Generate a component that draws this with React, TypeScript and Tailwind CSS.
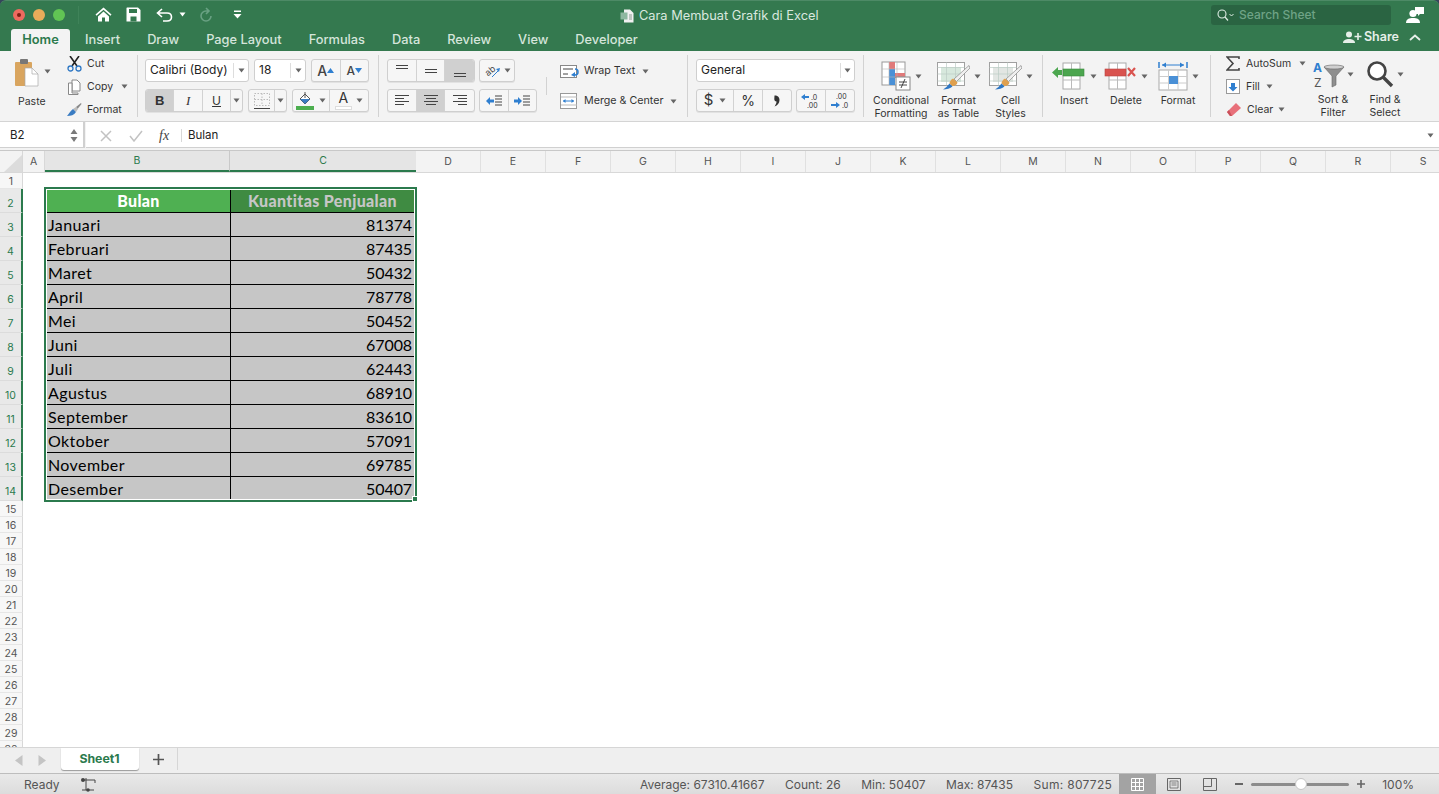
import type { ReactNode } from "react";

const ui = { fontFamily: "Inter, 'Liberation Sans', sans-serif" };
const cellFont = { fontFamily: "Lato, 'Open Sans', sans-serif" };

const TABS = ["Insert", "Draw", "Page Layout", "Formulas", "Data", "Review", "View", "Developer"];
const COLS = ["D", "E", "F", "G", "H", "I", "J", "K", "L", "M", "N", "O", "P", "Q", "R", "S"];
const DATA: [string, number][] = [
  ["Januari", 81374], ["Februari", 87435], ["Maret", 50432], ["April", 78778],
  ["Mei", 50452], ["Juni", 67008], ["Juli", 62443], ["Agustus", 68910],
  ["September", 83610], ["Oktober", 57091], ["November", 69785], ["Desember", 50407],
];

function Caret({ className = "" }: { className?: string }) {
  return (
    <svg width="7" height="5" viewBox="0 0 7 5" className={`shrink-0 ${className}`}>
      <path d="M0.5 0.5h6L3.5 4.5z" fill="#666" />
    </svg>
  );
}

function Seg({ w, active, children, last }: { w: number; active?: boolean; children: ReactNode; last?: boolean }) {
  return (
    <div
      style={{ width: w }}
      className={`h-full flex items-center justify-center ${last ? "" : "border-r border-[#d2d2d2]"} ${active ? "bg-[#d0d0d0]" : ""}`}
    >
      {children}
    </div>
  );
}

function Group({ children, className = "" }: { children: ReactNode; className?: string }) {
  return (
    <div className={`flex h-[23px] rounded-[3px] border border-[#cfcfcf] bg-[#f6f6f6] overflow-hidden shadow-[0_1px_0_#e2e2e2] ${className}`}>
      {children}
    </div>
  );
}

function Lines({ rows }: { rows: [number, number][] }) {
  return (
    <svg width="16" height="14" viewBox="0 0 16 14">
      {rows.map(([x, w], i) => (
        <rect key={i} x={x} y={1 + i * 3} width={w} height="1" fill="#444" />
      ))}
    </svg>
  );
}

function VAlign({ y }: { y: number }) {
  return (
    <svg width="16" height="16" viewBox="0 0 16 16">
      <rect x="2" y={y} width="12" height="1" fill="#444" />
      <rect x="2" y={y + 3} width="12" height="1" fill="#444" />
    </svg>
  );
}

function Indent({ flip }: { flip?: boolean }) {
  return (
    <svg width="18" height="12" viewBox="0 0 18 12">
      <path d={flip ? "M1 4.5h4V2l4 4-4 4V7.5H1z" : "M9 4.5H5V2L1 6l4 4V7.5h4z"} fill="#2f7fd0" />
      <path d="M10 1h7M10 4h7M10 7h7M10 10h7" stroke="#444" strokeWidth="1" />
    </svg>
  );
}

function BrushOverTable({ tint }: { tint: string }) {
  return (
    <svg width="33" height="28" viewBox="0 0 33 28">
      <rect x="0.5" y="0.5" width="27" height="23" fill="#fff" stroke="#a0a0a0" />
      <rect x="4" y="5" width="20" height="15" fill={tint} />
      <path d="M.5 5.5h27M.5 12h27M.5 19h27M9.5.5v23M18.5.5v23" stroke="#bccbc4" strokeWidth="0.7" />
      <path d="M32 3.5L17 17l2.5 2.5L33 6z" fill="#efefef" stroke="#888" strokeWidth="0.7" />
      <path d="M16 16.5l4.5 4c-.5 2.5-3 4-5.5 3.5l-2.5-2.5c0-2 1.5-4 3.5-5z" fill="#dfa04e" />
      <path d="M12.5 21.5l3 3c-2 2-6 3-9.5 3 2.5-1.5 4.5-3.5 6.5-6z" fill="#2f78c4" />
    </svg>
  );
}

function LabelBtn({ icon, label, w }: { icon: ReactNode; label: ReactNode; w: number }) {
  return (
    <div style={{ width: w }} className="flex flex-col items-center">
      <div className="h-[34px] flex items-center justify-center gap-[4px]">
        {icon}
        <Caret />
      </div>
      <div className="mt-[2px] text-[10.5px] leading-[12.5px] text-[#333] text-center whitespace-nowrap">{label}</div>
    </div>
  );
}

function Ribbon() {
  return (
    <div className="h-[71px] bg-[#f3f3f3] border-b border-[#d4d4d4] flex shrink-0">
      {/* clipboard */}
      <div className="w-[137px] pt-[5px] pl-[14px] flex border-r-0">
        <div className="w-[53px] flex flex-col">
          <div className="flex items-center gap-[4px] h-[33px]">
            <svg width="26" height="31" viewBox="0 0 26 31">
              <rect x="1" y="5" width="17" height="24" rx="1" fill="#d9a55f" />
              <rect x="6" y="2" width="8" height="5" rx="1" fill="#777" />
              <path d="M11 11h7l6 6v12H11z" fill="#fff" stroke="#aaa" strokeWidth="0.7" />
              <path d="M18 11v6h6" fill="none" stroke="#aaa" strokeWidth="0.7" />
            </svg>
            <Caret className="mb-[2px]" />
          </div>
          <div className="text-[10.5px] mt-[5px] ml-[4px] text-[#333]">Paste</div>
        </div>
        <div className="flex flex-col gap-[8px] text-[10.5px] text-[#333]">
          <div className="h-[15px] flex items-center gap-[5px]">
            <svg width="15" height="16" viewBox="0 0 15 16" className="shrink-0">
              <path d="M3 0l7 10M12 0L5 10" stroke="#222" strokeWidth="1.6" />
              <circle cx="3.5" cy="12.5" r="2.5" fill="none" stroke="#2f78c4" strokeWidth="1.3" />
              <circle cx="11.5" cy="12.5" r="2.5" fill="none" stroke="#2f78c4" strokeWidth="1.3" />
            </svg>
            <span>Cut</span>
          </div>
          <div className="h-[15px] flex items-center gap-[5px]">
            <svg width="15" height="16" viewBox="0 0 15 16" className="shrink-0">
              <path d="M5 1h5l3 3v8H5z" fill="#fff" stroke="#888" />
              <path d="M1.5 4H5v10h6v1.5H1.5z" fill="#fff" stroke="#888" />
            </svg>
            <span>Copy</span>
            <Caret className="ml-[3px]" />
          </div>
          <div className="h-[15px] flex items-center gap-[5px]">
            <svg width="15" height="15" viewBox="0 0 15 15" className="shrink-0">
              <path d="M14 1L9 5l1.5 2L14.5 2z" fill="#888" />
              <path d="M9 5l2 2-2 3-3-3z" fill="#bbb" />
              <path d="M6 7l3 3c-2 3-5 4-9 4 2-2 3-5 6-7z" fill="#3a7cc2" />
            </svg>
            <span>Format</span>
          </div>
        </div>
      </div>
      <div className="w-px h-[62px] mt-[4px] bg-[#d2d2d2]" />

      {/* font */}
      <div className="w-[240px] pl-[7px] pt-[8px] flex flex-col gap-[7px]">
        <div className="flex gap-[5px]">
          <div className="w-[104px] h-[23px] bg-white border border-[#cfcfcf] rounded-[3px] flex items-center pl-[4px] pb-px text-[12px] text-[#222]">
            <span className="flex-1">Calibri (Body)</span>
            <div className="w-[15px] h-[15px] border-l border-[#ddd] flex items-center justify-center"><Caret /></div>
          </div>
          <div className="w-[52px] h-[23px] bg-white border border-[#cfcfcf] rounded-[3px] flex items-center pl-[4px] pb-px text-[12px] text-[#222]">
            <span className="flex-1">18</span>
            <div className="w-[15px] h-[15px] border-l border-[#ddd] flex items-center justify-center"><Caret /></div>
          </div>
          <Group className="w-[58px]">
            <Seg w={29}>
              <span className="text-[14px] text-[#444] font-medium">A</span>
              <svg width="7" height="5" viewBox="0 0 7 5"><path d="M0 5h7L3.5 0z" fill="#2f7fd0" /></svg>
            </Seg>
            <Seg w={28} last>
              <span className="text-[12px] text-[#444] font-medium">A</span>
              <svg width="7" height="5" viewBox="0 0 7 5"><path d="M0 0h7L3.5 5z" fill="#2f7fd0" /></svg>
            </Seg>
          </Group>
        </div>
        <div className="flex gap-[5px]">
          <Group className="w-[98px]">
            <Seg w={29} active><span className="font-bold text-[13px] text-[#333]" style={{ fontFamily: "'Liberation Sans', sans-serif" }}>B</span></Seg>
            <Seg w={29}><span className="italic text-[13px] text-[#333]" style={{ fontFamily: "'Liberation Serif', serif" }}>I</span></Seg>
            <Seg w={29}><span className="underline text-[12px] text-[#333]">U</span></Seg>
            <Seg w={11} last><Caret /></Seg>
          </Group>
          <Group className="w-[39px]">
            <Seg w={27}>
              <svg width="18" height="18" viewBox="0 0 18 18">
                <rect x="1.5" y="1.5" width="15" height="12" fill="none" stroke="#bbb" strokeDasharray="1.5 1.5" />
                <path d="M9 1.5v12M1.5 7.5h15" stroke="#bbb" strokeDasharray="1.5 1.5" />
                <rect x="1" y="16" width="16" height="1" fill="#444" />
              </svg>
            </Seg>
            <Seg w={11} last><Caret /></Seg>
          </Group>
          <Group className="w-[77px]">
            <Seg w={37}>
              <div className="flex items-center gap-[5px]">
                <svg width="18" height="19" viewBox="0 0 18 19">
                  <path d="M4 8l5-5 5 5-5 5z" fill="#fff" stroke="#555" />
                  <path d="M4 8h10l-5 5z" fill="#3a7cc2" />
                  <path d="M9 1v6" stroke="#555" />
                  <rect x="0" y="15" width="18" height="4" fill="#4cae4f" />
                </svg>
                <Caret />
              </div>
            </Seg>
            <Seg w={39} last>
              <div className="flex items-center gap-[4px]">
                <div className="flex flex-col items-center w-[17px]">
                  <span className="text-[14px] leading-[14px] text-[#333]">A</span>
                  <div className="w-[17px] h-[4px] bg-white border border-[#ddd] mt-[1px]" />
                </div>
                <Caret />
              </div>
            </Seg>
          </Group>
        </div>
      </div>
      <div className="w-px h-[62px] mt-[4px] bg-[#d2d2d2]" />

      {/* alignment */}
      <div className="w-[308px] pl-[8px] pt-[8px] flex">
        <div className="flex flex-col gap-[7px]">
          <div className="flex gap-[4px]">
            <Group className="w-[88px]">
              <Seg w={29}><VAlign y={2} /></Seg>
              <Seg w={29}><VAlign y={6} /></Seg>
              <Seg w={29} last active><VAlign y={10} /></Seg>
            </Group>
            <Group className="w-[36px]">
              <Seg w={35} last>
                <div className="flex items-center gap-[3px]">
                  <svg width="17" height="16" viewBox="0 0 17 16" className="overflow-visible">
                    <text x="1" y="11" fontSize="9" fill="#444" transform="rotate(-40 6 8)" fontFamily="Inter, sans-serif">ab</text>
                    <path d="M8 14l7-7" stroke="#2f7fd0" strokeWidth="1" />
                    <path d="M16 5l-4 1 3 3z" fill="#2f7fd0" />
                  </svg>
                  <Caret />
                </div>
              </Seg>
            </Group>
          </div>
          <div className="flex gap-[4px]">
            <Group className="w-[88px]">
              <Seg w={29}><Lines rows={[[1, 14], [1, 9], [1, 14], [1, 9]]} /></Seg>
              <Seg w={29} active><Lines rows={[[1, 14], [3, 10], [1, 14], [3, 10]]} /></Seg>
              <Seg w={29} last><Lines rows={[[1, 14], [6, 9], [1, 14], [6, 9]]} /></Seg>
            </Group>
            <Group className="w-[58px]">
              <Seg w={29}><Indent /></Seg>
              <Seg w={28} last><Indent flip /></Seg>
            </Group>
          </div>
        </div>
        <div className="w-px h-[18px] mt-[18px] ml-[9px] bg-[#d2d2d2]" />
        <div className="ml-[13px] flex flex-col text-[10.7px] text-[#333] pt-[4px] gap-[14px]">
          <div className="h-[16px] flex items-center gap-[4px]">
            <svg width="20" height="15" viewBox="0 0 20 15" className="shrink-0">
              <rect x="0.5" y="1.5" width="16" height="12" fill="#fff" stroke="#888" />
              <path d="M3 5h10M3 10h5" stroke="#444" />
              <path d="M15 5c4 0 4 6 0 6" fill="none" stroke="#2f7fd0" strokeWidth="1.5" />
              <path d="M11 11l4-3v5z" fill="#2f7fd0" />
            </svg>
            <span>Wrap Text</span>
            <Caret className="ml-[3px]" />
          </div>
          <div className="h-[16px] flex items-center gap-[4px]">
            <svg width="18" height="16" viewBox="0 0 18 16" className="shrink-0 mr-[2px]">
              <rect x="0.5" y="0.5" width="16" height="15" fill="#fff" stroke="#999" />
              <path d="M1 4h16M1 12h16" stroke="#bbb" />
              <path d="M3 8h11" stroke="#2f7fd0" />
              <path d="M3 8l2.5-2v4zM14 8l-2.5-2v4z" fill="#2f7fd0" />
            </svg>
            <span>Merge &amp; Center</span>
            <Caret className="ml-[3px]" />
          </div>
        </div>
      </div>
      <div className="w-px h-[62px] mt-[4px] bg-[#d2d2d2]" />

      {/* number */}
      <div className="w-[175px] pl-[8px] pt-[8px] flex flex-col gap-[7px]">
        <div className="w-[159px] h-[23px] bg-white border border-[#cfcfcf] rounded-[3px] flex items-center pl-[4px] pb-px text-[12px] text-[#222]">
          <span className="flex-1">General</span>
          <div className="w-[14px] h-[15px] border-l border-[#ddd] flex items-center justify-center"><Caret /></div>
        </div>
        <div className="flex gap-[4px]">
          <Group className="w-[96px]">
            <Seg w={37}>
              <span className="text-[15px] text-[#333] mr-[6px]">$</span>
              <Caret />
            </Seg>
            <Seg w={29}><span className="text-[14px] text-[#333]">%</span></Seg>
            <Seg w={28} last>
              <svg width="6" height="12" viewBox="0 0 6 12">
                <path d="M0.5 0.5c3.5 0 5 2 5 4.5 0 3-2 5.5-5 6.5 1.5-2 2-3.5 2-5-1.5 0-2.2-1-2.2-2.5 0-1 .2-2.5.2-3.500z" fill="#333" />
              </svg>
            </Seg>
          </Group>
          <Group className="w-[59px]">
            <Seg w={29}>
              <svg width="20" height="16" viewBox="0 0 20 16">
                <path d="M8 3H4V1L0 4l4 3V5h4z" fill="#2f7fd0" />
                <text x="10" y="7" fontSize="7" fill="#333" fontFamily="Inter, sans-serif">.0</text>
                <text x="6" y="15" fontSize="7" fill="#333" fontFamily="Inter, sans-serif">.00</text>
              </svg>
            </Seg>
            <Seg w={29} last>
              <svg width="20" height="16" viewBox="0 0 20 16">
                <text x="6" y="6" fontSize="7" fill="#333" fontFamily="Inter, sans-serif">.00</text>
                <path d="M1 11h5V9l4 3-4 3v-2H1z" fill="#2f7fd0" />
                <text x="12" y="15" fontSize="7" fill="#333" fontFamily="Inter, sans-serif">.0</text>
              </svg>
            </Seg>
          </Group>
        </div>
      </div>
      <div className="w-px h-[62px] mt-[4px] bg-[#d2d2d2]" />

      {/* styles */}
      <div className="w-[178px] pl-[6px] pt-[8px] flex gap-[2px]">
        <LabelBtn
          w={62}
          label={<>Conditional<br />Formatting</>}
          icon={
            <svg width="30" height="30" viewBox="0 0 30 30">
              <rect x="1" y="1" width="23" height="23" fill="#fff" stroke="#999" />
              <rect x="8" y="1" width="6" height="7" fill="#e07a7a" />
              <rect x="8" y="8" width="6" height="7" fill="#4a90d6" />
              <rect x="14" y="12" width="10" height="5" fill="#e07a7a" />
              <rect x="8" y="15" width="6" height="9" fill="#4a90d6" />
              <path d="M1 8h23M1 16h23M8 1v23M16 1v23" stroke="#b5b5b5" strokeWidth="0.6" />
              <rect x="15" y="16" width="14" height="13" fill="#fff" stroke="#888" />
              <path d="M18 21h8M18 24h8M24 18l-4 9" stroke="#333" strokeWidth="0.9" />
            </svg>
          }
        />
        <LabelBtn w={49} label={<>Format<br />as Table</>} icon={<BrushOverTable tint="#d7e8dd" />} />
        <LabelBtn w={51} label={<>Cell<br />Styles</>} icon={<BrushOverTable tint="#e2e6e3" />} />
      </div>
      <div className="w-px h-[62px] mt-[4px] bg-[#d2d2d2]" />

      {/* cells */}
      <div className="w-[167px] pl-[5px] pt-[8px] flex">
        <LabelBtn
          w={52}
          label="Insert"
          icon={
            <svg width="34" height="28" viewBox="0 0 34 28">
              <rect x="11" y="1" width="17" height="26" fill="#fff" stroke="#aaa" />
              <path d="M11 18h17M19.5 1v26" stroke="#bbb" />
              <rect x="11" y="7" width="21" height="7" fill="#4ca64f" stroke="#3a8a3e" strokeWidth="0.6" />
              <path d="M0 10.5L6 5v3h4v5H6v3z" fill="#4ca64f" />
            </svg>
          }
        />
        <LabelBtn
          w={52}
          label="Delete"
          icon={
            <svg width="33" height="28" viewBox="0 0 33 28">
              <rect x="5" y="1" width="17" height="26" fill="#fff" stroke="#aaa" />
              <path d="M5 18h17M13.5 1v26" stroke="#bbb" />
              <rect x="1" y="7" width="21" height="7" fill="#d9534f" stroke="#b84340" strokeWidth="0.6" />
              <path d="M24 6l7 8M31 6l-7 8" stroke="#d9534f" strokeWidth="2.2" />
            </svg>
          }
        />
        <LabelBtn
          w={52}
          label="Format"
          icon={
            <svg width="30" height="30" viewBox="0 0 30 30">
              <path d="M1 1v6M29 1v6" stroke="#2f7fd0" strokeWidth="1.5" />
              <path d="M4 4h22" stroke="#2f7fd0" />
              <path d="M4 4l4-2.5v5zM26 4l-4-2.5v5z" fill="#2f7fd0" />
              <rect x="1" y="9" width="28" height="20" fill="#fff" stroke="#aaa" />
              <path d="M10.5 9v20M20 9v20M1 15.5h28M1 22h28" stroke="#ccc" />
              <rect x="11" y="15" width="9" height="8" fill="#4a90d6" />
            </svg>
          }
        />
      </div>
      <div className="w-px h-[62px] mt-[4px] bg-[#d2d2d2]" />

      {/* editing */}
      <div className="flex-1 pl-[15px] pt-[5px] flex text-[10.5px] text-[#333]">
        <div className="w-[81px] flex flex-col gap-[8px]">
          <div className="h-[15px] flex items-center gap-[6px]">
            <svg width="14" height="15" viewBox="0 0 14 15" className="shrink-0"><path d="M13 3V1H1l6 6.5L1 14h12v-2" fill="none" stroke="#444" strokeWidth="1.6" /></svg>
            <span>AutoSum</span>
            <Caret className="ml-[2px]" />
          </div>
          <div className="h-[15px] flex items-center gap-[6px]">
            <svg width="14" height="15" viewBox="0 0 14 15" className="shrink-0">
              <rect x="0.5" y="0.5" width="13" height="14" fill="#fff" stroke="#999" />
              <path d="M5 4h4v4h2.5L7 12.5 2.5 8H5z" fill="#2f7fd0" />
            </svg>
            <span>Fill</span>
            <Caret />
          </div>
          <div className="h-[15px] flex items-center gap-[5px]">
            <svg width="16" height="15" viewBox="0 0 16 15" className="shrink-0">
              <path d="M1 10l9-9 5 5-9 8H4z" fill="#e8707a" />
              <path d="M1 10l3 4h2L3 8z" fill="#c9505a" />
            </svg>
            <span>Clear</span>
            <Caret />
          </div>
        </div>
        <div className="w-[52px] flex flex-col items-center">
          <div className="h-[30px] mt-[3px] flex items-center gap-[2px]">
            <svg width="32" height="28" viewBox="0 0 32 28" className="shrink-0 overflow-visible">
              <text x="0" y="12" fontSize="12" fontWeight="700" fill="#2f7fd0" fontFamily="Inter, sans-serif">A</text>
              <text x="1" y="27" fontSize="12" fill="#555" fontFamily="Inter, sans-serif">Z</text>
              <path d="M11 7h20l-8 9v9l-4 2V16z" fill="#8f8f8f" stroke="#666" strokeWidth="0.6" />
              <ellipse cx="21" cy="7" rx="10" ry="2" fill="#d0d0d0" stroke="#666" strokeWidth="0.6" />
            </svg>
            <Caret />
          </div>
          <div className="mt-[5px] leading-[12.5px] text-center whitespace-nowrap">Sort &amp;<br />Filter</div>
        </div>
        <div className="w-[52px] flex flex-col items-center">
          <div className="h-[30px] mt-[3px] flex items-center gap-[3px]">
            <svg width="28" height="28" viewBox="0 0 28 28" className="shrink-0">
              <circle cx="11" cy="11" r="8.5" fill="#fff" stroke="#444" strokeWidth="2.6" />
              <path d="M17 17l9 9" stroke="#444" strokeWidth="3.4" />
            </svg>
            <Caret />
          </div>
          <div className="mt-[5px] leading-[12.5px] text-center whitespace-nowrap">Find &amp;<br />Select</div>
        </div>
      </div>
    </div>
  );
}

function TitleBar() {
  return (
    <div className="h-[51px] bg-[#34794f] rounded-t-[6px] border-t border-[#4d8a66] flex flex-col shrink-0 text-white">
      <div className="h-[27px] flex items-center relative">
        <div className="flex items-center gap-[8px] pl-[13px]">
          <div className="w-[12px] h-[12px] rounded-full bg-[#ee6a5f] flex items-center justify-center"><div className="w-[4px] h-[4px] rounded-full bg-[#7e1d13]" /></div>
          <div className="w-[12px] h-[12px] rounded-full bg-[#e8ac5a]" />
          <div className="w-[12px] h-[12px] rounded-full bg-[#61c554]" />
        </div>
        <div className="w-px h-[18px] bg-[#3f8359] ml-[13px]" />
        <div className="flex items-center ml-[16px]">
          <svg width="17" height="15" viewBox="0 0 17 15" className="mr-[14px]">
            <path d="M8.5 0.5L0.5 7.5l1 1.2 7-6 7 6 1-1.2zM3 9.5V14.5h4V10.5h3v4h4V9.5L8.5 4.5z" fill="#fff" />
          </svg>
          <svg width="15" height="15" viewBox="0 0 15 15" className="mr-[15px]">
            <path d="M1 0.5h11l2.5 2.5v11.5H.5V1z" fill="#fff" />
            <rect x="3" y="2" width="8" height="4" fill="#34794f" />
            <rect x="4.5" y="9.5" width="6" height="5" fill="#34794f" />
          </svg>
          <svg width="17" height="14" viewBox="0 0 17 14" className="mr-[6px]">
            <path d="M6 1L1.5 5 6 9M2 5h9c6 0 6 8 0 8H7" fill="none" stroke="#fff" strokeWidth="1.6" />
          </svg>
          <Caret className="mr-[13px] brightness-[4]" />
          <svg width="15" height="15" viewBox="0 0 15 15" className="mr-[19px]">
            <path d="M7 1l3 3-3 3M10 4H7a5 5 0 1 0 5 5" fill="none" stroke="#69a183" strokeWidth="1.6" />
          </svg>
          <svg width="9" height="9" viewBox="0 0 9 9">
            <rect x="1" y="0.5" width="7" height="1.5" fill="#fff" />
            <path d="M0.5 4h8L4.5 8.5z" fill="#fff" />
          </svg>
        </div>
        {/* title is centred over the window, independent of the toolbar */}
        <div className="absolute left-[620px] top-[5px] flex items-center gap-[5px] text-[12.8px] text-[#d9e8df] whitespace-nowrap">
          <svg width="14" height="14" viewBox="0 0 14 14">
            <path d="M4 0.5h6l3.5 3.5v9.5H4z" fill="#f1f1f1" />
            <rect x="0.5" y="3.5" width="7" height="7" fill="#8eb8a0" />
            <path d="M9 6h3M9 8h3M9 10h3" stroke="#8a9a90" />
          </svg>
          <span>Cara Membuat Grafik di Excel</span>
        </div>
        <div className="ml-auto flex items-center">
          <div className="w-[180px] h-[20px] bg-[#2a6442] rounded-[3px] flex items-center pl-[6px] gap-[5px]">
            <svg width="17" height="12" viewBox="0 0 17 12">
              <circle cx="5" cy="5" r="4" fill="none" stroke="#dfeee5" strokeWidth="1.1" />
              <path d="M8 8l3 3.5" stroke="#dfeee5" strokeWidth="1.2" />
              <path d="M12.5 5l2 2 2-2" fill="none" stroke="#dfeee5" />
            </svg>
            <span className="text-[12px] text-[#6fa386] font-medium">Search Sheet</span>
          </div>
          <svg width="18" height="18" viewBox="0 0 18 18" className="ml-[15px] mr-[15px]">
            <path d="M9 1h9v7h-4l-2 2V8H9z" fill="#fff" />
            <circle cx="7" cy="7.5" r="3.6" fill="#fff" />
            <path d="M0 17c0-4 3-5 7-5s7 1 7 5z" fill="#fff" />
          </svg>
        </div>
      </div>
      <div className="h-[23px] flex items-end text-[12.8px] font-medium text-[#d5e5db]">
        <div className="ml-[11px] w-[59px] h-[22px] bg-[#f3f3f3] rounded-t-[3px] flex items-center justify-center pb-px text-[#2b7a4d] font-semibold">Home</div>
        <div className="ml-[15px] flex gap-[27px] h-[22px] items-center pb-px">
          {TABS.map((t) => <span key={t}>{t}</span>)}
        </div>
        <div className="ml-auto h-[24px] -mt-[3px] flex items-center self-start text-white text-[12.5px] font-semibold">
          <svg width="19" height="13" viewBox="0 0 19 13" className="mr-[2px]">
            <circle cx="6" cy="3.5" r="3" fill="#e6efe9" />
            <path d="M0 12c0-3 3-4 6-4s6 1 6 4z" fill="#e6efe9" />
            <path d="M15 2v7M11.5 5.5h7" stroke="#e6efe9" strokeWidth="1.6" />
          </svg>
          <span className="text-[#e6efe9]">Share</span>
          <svg width="12" height="7" viewBox="0 0 12 7" className="ml-[10px] mr-[18px]">
            <path d="M1 6l5-4.5L11 6" fill="none" stroke="#e6efe9" strokeWidth="1.8" />
          </svg>
        </div>
      </div>
    </div>
  );
}

function FormulaBar() {
  return (
    <div className="h-[29px] bg-[#f3f3f3] border-b border-[#c8c8c8] flex shrink-0">
      <div className="w-[85px] h-[26px] bg-white border-r-2 border-b border-[#d0d0d0] flex items-center pl-[10px] pt-[2px] text-[11.5px] text-[#222]">
        <span className="flex-1">B2</span>
        <svg width="8" height="15" viewBox="0 0 8 15" className="mr-[5px]">
          <path d="M0.5 6L4 1l3.5 5zM0.5 9L4 14l3.5-5z" fill="#7a7a7a" />
        </svg>
      </div>
      <div className="flex-1 h-[26px] ml-[1px] bg-white border-b border-[#d0d0d0] flex items-center pt-[2px] text-[11.5px] text-[#222]">
        <svg width="12" height="12" viewBox="0 0 12 12" className="ml-[14px]"><path d="M1 1l10 10M11 1L1 11" stroke="#c2c2c2" strokeWidth="1.5" /></svg>
        <svg width="14" height="12" viewBox="0 0 14 12" className="ml-[17px]"><path d="M1 6l4 5 8-10" fill="none" stroke="#c2c2c2" strokeWidth="1.5" /></svg>
        <span className="ml-[16px] w-[16px] text-[14px] italic text-[#444]" style={{ fontFamily: "'Liberation Serif', serif" }}>fx</span>
        <div className="w-px h-[13px] bg-[#d8d8d8] ml-[6px]" />
        <span className="ml-[6px] flex-1">Bulan</span>
        <Caret className="mr-[5px]" />
      </div>
    </div>
  );
}

function ColumnHeaders() {
  return (
    <div className="h-[22px] flex shrink-0 overflow-hidden text-[10.5px] text-[#555] bg-[#f3f3f3] border-b border-[#d8d8d8]">
      <div className="w-[23px] shrink-0 h-full border-r border-[#d8d8d8] overflow-hidden flex items-end justify-end">
        <svg width="21" height="19" viewBox="0 0 21 19"><path d="M21 2v17H3z" fill="#dcdcdc" /></svg>
      </div>
      <div className="w-[22px] shrink-0 border-r border-[#d8d8d8] flex items-center justify-center pt-px">A</div>
      <div className="w-[185px] shrink-0 border-r border-r-[#c9c9c9] bg-[#e5e5e5] border-b-2 border-b-[#2b7a4d] flex items-center justify-center pt-px text-[#2b7a4d]">B</div>
      <div className="w-[186px] shrink-0 bg-[#e5e5e5] border-b-2 border-b-[#2b7a4d] flex items-center justify-center pt-px text-[#2b7a4d]">C</div>
      {COLS.map((c) => (
        <div key={c} className="w-[65px] shrink-0 border-r border-[#e0e0e0] flex items-center justify-center pt-px">{c}</div>
      ))}
    </div>
  );
}

function RowHeader({ n, tall }: { n: number; tall?: boolean }) {
  return tall ? (
    <div className="h-[24px] shrink-0 bg-[#e9e9e9] border-r-2 border-r-[#2b7a4d] border-b border-b-[#dcdcdc] flex items-center justify-center pt-[6px] text-[10.5px] text-[#2b7a4d]">{n}</div>
  ) : (
    <div className="h-[16px] shrink-0 bg-[#f7f7f7] border-r border-r-[#d8d8d8] border-b border-b-[#e6e6e6] flex items-center justify-center pt-[2px] text-[10.5px] text-[#555]">{n}</div>
  );
}

function Sheet() {
  const after = Array.from({ length: 16 }, (_, i) => 15 + i);
  return (
    <div className="flex-1 min-h-0 flex overflow-hidden bg-white">
      <div className="w-[23px] shrink-0 flex flex-col">
        <RowHeader n={1} />
        {Array.from({ length: 13 }, (_, i) => <RowHeader key={i} n={i + 2} tall />)}
        {after.map((n) => <RowHeader key={n} n={n} />)}
      </div>
      <div className="flex-1 pl-[24px] pt-[17px]">
        <div className="relative w-[367px]">
          <div className="flex h-[23px] border-b border-black text-[16px] font-bold leading-[22px]" style={cellFont}>
            <div className="w-[184px] bg-[#4fb052] border-r border-black text-center text-white font-black tracking-[0.3px]">Bulan</div>
            <div className="flex-1 bg-[#3f8b42] text-center text-[#c6c6c6] font-black tracking-[0.35px]">Kuantitas Penjualan</div>
          </div>
          {DATA.map(([m, v], i) => {
            const end = i === DATA.length - 1;
            return (
              <div key={m} className={`flex text-[16px] leading-[24px] text-black bg-[#c6c6c6] ${end ? "h-[22px]" : "h-[24px] border-b border-black"}`} style={cellFont}>
                <div className="w-[184px] border-r border-black pl-[1px] tracking-[0.4px]">{m}</div>
                <div className="flex-1 text-right pr-[2px] tracking-[-0.1px]">{v}</div>
              </div>
            );
          })}
          {/* selection outline */}
          <div className="absolute -left-[3px] -top-[3px] -right-[3px] -bottom-[3px] border-2 border-[#2b7a4d] outline outline-1 -outline-offset-3 outline-white pointer-events-none" />
          <div className="absolute -right-[4px] -bottom-[3px] w-[6px] h-[6px] bg-[#2b7a4d] border border-white" />
        </div>
      </div>
    </div>
  );
}

function SheetTabs() {
  return (
    <div className="h-[26px] bg-[#efefef] border-t border-[#d6d6d6] flex shrink-0">
      <div className="w-[61px] flex items-center pl-[15px] gap-[15px]">
        <svg width="8" height="11" viewBox="0 0 8 11"><path d="M7.5 0v11L0 5.5z" fill="#c4c4c4" /></svg>
        <svg width="8" height="11" viewBox="0 0 8 11"><path d="M.5 0v11L8 5.5z" fill="#c4c4c4" /></svg>
      </div>
      <div className="w-[78px] h-[22px] bg-white rounded-b-[3px] shadow-[0_1px_1px_#999] flex items-center justify-center pt-px pr-px text-[12.3px] font-bold text-[#2b7a4d]">Sheet1</div>
      <div className="w-[39px] flex items-center justify-center border-r border-[#d6d6d6] h-[22px]">
        <svg width="11" height="11" viewBox="0 0 11 11"><path d="M5.5 0v11M0 5.5h11" stroke="#555" strokeWidth="1.7" /></svg>
      </div>
    </div>
  );
}

function StatusBar() {
  return (
    <div className="h-[21px] bg-linear-to-b from-[#e9e9e9] to-[#dcdcdc] border-t border-[#bdbdbd] flex items-center shrink-0 text-[12px] text-[#555]">
      <span className="ml-[24px] pt-[2px]">Ready</span>
      <svg width="16" height="15" viewBox="0 0 16 15" className="ml-[20px]">
        <circle cx="3" cy="3" r="2" fill="#444" />
        <circle cx="8" cy="13" r="1.8" fill="#444" />
        <path d="M3 3h12v3M6 1v12M2 13h12" fill="none" stroke="#444" />
      </svg>
      <div className="ml-auto flex items-center gap-[20.5px] pt-[2px]">
        <span>Average: 67310.41667</span>
        <span>Count: 26</span>
        <span>Min: 50407</span>
        <span>Max: 87435</span>
        <span className="tracking-[0.3px]">Sum: 807725</span>
      </div>
      <div className="ml-[7px] w-[37px] h-full bg-[#a3a3a3] flex items-center justify-center">
        <svg width="13" height="13" viewBox="0 0 13 13"><path d="M.5.5h12v12H.5zM4.5.5v12M8.5.5v12M.5 4.5h12M.5 8.5h12" fill="none" stroke="#fff" /></svg>
      </div>
      <div className="w-[36px] flex justify-center">
        <svg width="14" height="13" viewBox="0 0 14 13"><path d="M.5.5h13v12H.5z" fill="none" stroke="#666" /><path d="M3 3h8v7H3zM4.5 5h5M4.5 7h5" fill="none" stroke="#666" strokeWidth="0.8" /></svg>
      </div>
      <div className="w-[36px] flex justify-center">
        <svg width="14" height="13" viewBox="0 0 14 13"><path d="M.5.5h13v12H.5zM.5 8.5h8v-8" fill="none" stroke="#666" /></svg>
      </div>
      <svg width="8" height="3" viewBox="0 0 8 3" className="ml-[7px]"><rect width="8" height="2" fill="#666" /></svg>
      <div className="ml-[8px] w-[98px] h-[3px] rounded-full bg-[#8c8c8c] relative">
        <div className="absolute left-[44px] -top-[5px] w-[12px] h-[12px] rounded-full bg-white border border-[#c5c5c5]" />
      </div>
      <svg width="8" height="8" viewBox="0 0 8 8" className="ml-[8px]"><path d="M4 0v8M0 4h8" stroke="#666" strokeWidth="1.6" /></svg>
      <span className="ml-[17px] mr-[25px] pt-[2px]">100%</span>
    </div>
  );
}

export default function App() {
  return (
    <div className="w-[1439px] h-[794px] flex flex-col overflow-hidden bg-[#35465a]" style={ui}>
      <TitleBar />
      <Ribbon />
      <FormulaBar />
      <ColumnHeaders />
      <Sheet />
      <SheetTabs />
      <StatusBar />
    </div>
  );
}
